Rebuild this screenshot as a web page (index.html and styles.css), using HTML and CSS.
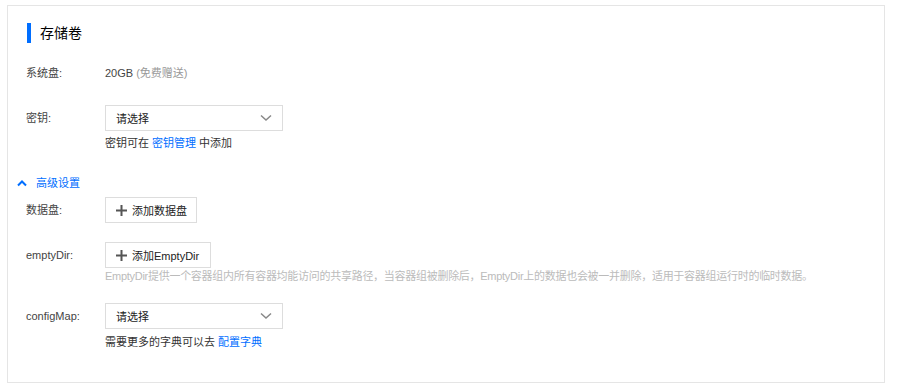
FILE: index.html
```html
<!DOCTYPE html>
<html lang="zh">
<head>
<meta charset="utf-8">
<link rel="stylesheet" href="styles.css">
</head>
<body>
<div class="card">
  <div class="title"><span class="bar"></span><span class="title-text">存储卷</span></div>

  <div class="row row-sys">
    <div class="label">系统盘:</div>
    <div class="value">20GB <span class="muted">(免费赠送)</span></div>
  </div>

  <div class="row row-secret">
    <div class="label">密钥:</div>
    <div class="field">
      <div class="select"><span>请选择</span>
        <svg class="caret" width="12" height="8" viewBox="0 0 12 8"><path d="M1 1.5 L6 6 L11 1.5" fill="none" stroke="#888" stroke-width="1.5"/></svg>
      </div>
    </div>
  </div>
  <div class="hint">密钥可在 <a class="link">密钥管理</a> 中添加</div>

  <div class="adv">
    <svg class="adv-icon" width="10" height="8" viewBox="0 0 10 8"><path d="M1 6.5 L5 2.5 L9 6.5" fill="none" stroke="#006eff" stroke-width="2"/></svg>
    <span>高级设置</span>
  </div>

  <div class="row row-data">
    <div class="label">数据盘:</div>
    <div class="field">
      <div class="btn">
        <svg class="plus" width="11" height="11" viewBox="0 0 11 11"><path d="M5.5 0 V11 M0 5.5 H11" stroke="#555" stroke-width="2"/></svg>
        <span>添加数据盘</span>
      </div>
    </div>
  </div>

  <div class="row row-empty">
    <div class="label">emptyDir:</div>
    <div class="field">
      <div class="btn btn-wide">
        <svg class="plus" width="11" height="11" viewBox="0 0 11 11"><path d="M5.5 0 V11 M0 5.5 H11" stroke="#555" stroke-width="2"/></svg>
        <span>添加EmptyDir</span>
      </div>
    </div>
  </div>
  <div class="hint hint-gray">EmptyDir提供一个容器组内所有容器均能访问的共享路径，当容器组被删除后，EmptyDir上的数据也会被一并删除，适用于容器组运行时的临时数据。</div>

  <div class="row row-config">
    <div class="label">configMap:</div>
    <div class="field">
      <div class="select"><span>请选择</span>
        <svg class="caret" width="12" height="8" viewBox="0 0 12 8"><path d="M1 1.5 L6 6 L11 1.5" fill="none" stroke="#888" stroke-width="1.5"/></svg>
      </div>
    </div>
  </div>
  <div class="hint">需要更多的字典可以去 <a class="link">配置字典</a></div>
</div>
</body>
</html>
```
FILE: styles.css
```css
html, body {
  margin: 0;
  padding: 0;
  background: #fff;
}
body {
  font-family: "Liberation Sans", "Noto Sans CJK SC", sans-serif;
  font-size: 11px;
  color: #333;
}
.card {
  margin: 5px 12px 0 7px;
  height: 359px;
  border: 1px solid #e5e5e5;
  padding: 17px 0 0 18px;
  box-sizing: content-box;
}
.title {
  display: flex;
  align-items: center;
  height: 20px;
}
.bar {
  width: 4px;
  height: 20px;
  background: #006eff;
  margin-left: 1px;
}
.title-text {
  font-size: 14px;
  margin-left: 9px;
  color: #000;
  line-height: 20px;
}
.row {
  display: flex;
  align-items: center;
}
.label {
  width: 79px;
  color: #444;
  line-height: 20px;
}
.row-sys { margin-top: 20px; height: 20px; }
.value { color: #444; line-height: 20px; }
.muted { color: #999; }
.row-secret { margin-top: 22px; }
.select {
  height: 24px;
  border: 1px solid #ddd;
  display: flex;
  align-items: center;
  justify-content: space-between;
  padding: 0 10px 0 10px;
  box-sizing: content-box;
  width: 156px;
  color: #222;
}
.hint {
  margin-left: 79px;
  line-height: 18px;
  margin-top: 3px;
  color: #333;
}
.link { color: #006eff; text-decoration: none; }
.adv {
  display: flex;
  align-items: center;
  margin-top: 22px;
  margin-left: -9px;
  color: #006eff;
  line-height: 18px;
}
.adv-icon { margin-right: 9px; }
.row-data { margin-top: 5px; }
.btn {
  height: 24px;
  border: 1px solid #ddd;
  display: inline-flex;
  align-items: center;
  padding: 0 9px 0 10px;
  color: #222;
}
.btn-wide { padding-right: 11px; }
.plus { margin-right: 5px; }
.row-empty { margin-top: 19px; }
.hint-gray {
  color: #bbb;
  margin-top: 0;
  line-height: 16px;
  letter-spacing: -0.28px;
  white-space: nowrap;
}
.row-config { margin-top: 19px; }
.row-config + .hint { margin-top: 4px; }
```
